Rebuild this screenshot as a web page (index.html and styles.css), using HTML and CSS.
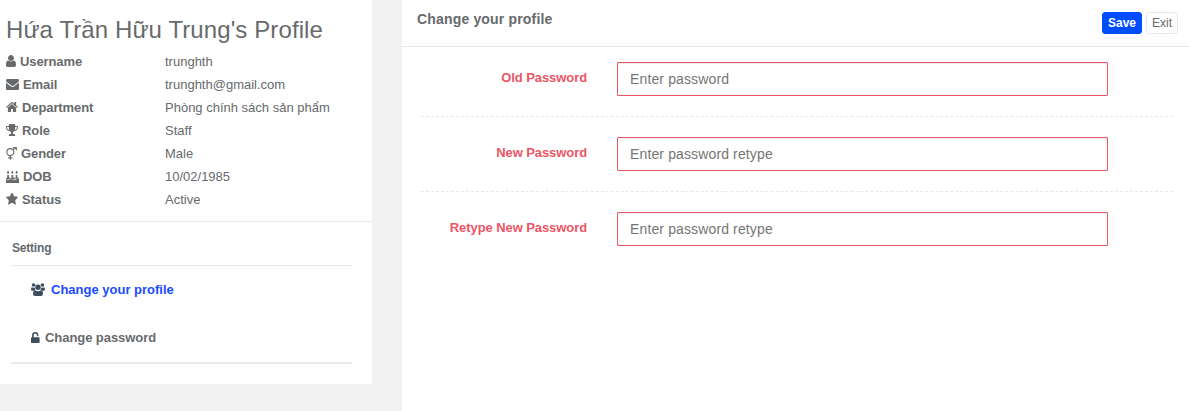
FILE: index.html
```html
<!DOCTYPE html>
<html lang="vi">
<head>
<meta charset="utf-8">
<title>Profile</title>
<link rel="stylesheet" href="styles.css">
</head>
<body>
<div class="page">
  <aside class="sidebar">
    <section class="profile">
      <h2 class="profile-name">Hứa Trần Hữu Trung's Profile</h2>
      <dl class="details">
        <dt><svg class="icon w10" viewBox="256 128 1280 1536" preserveAspectRatio="none"><path d="M1536 1399q0 109-62.5 187t-150.5 78h-854q-88 0-150.5-78t-62.5-187q0-85 8.5-160.5t31.5-152 58.5-131 94-89 134.5-34.5q131 128 313 128t313-128q76 0 134.5 34.5t94 89 58.5 131 31.5 152 8.5 160.5zm-256-887q0 159-112.5 271.5t-271.5 112.5-271.5-112.5-112.5-271.5 112.5-271.5 271.5-112.5 271.5 112.5 112.5 271.5z"/></svg>Username</dt><dd>trunghth</dd>
        <dt><svg class="icon w13" viewBox="0 128 1792 1536" preserveAspectRatio="none"><path d="M1792 710v794q0 66-47 113t-113 47h-1472q-66 0-113-47t-47-113v-794q44 49 101 87 362 246 497 345 57 42 92.5 65.5t94.5 48 110 24.5h2q51 0 110-24.5t94.5-48 92.5-65.5q170-123 498-345 57-39 100-87zm0-294q0 79-49 151t-122 123q-376 261-468 325-10 7-42.5 31t-54 38.5-52 32.5-57.5 27-50 9h-2q-23 0-50-9t-57.5-27-52-32.5-54-38.5-42.5-31q-91-64-262-182.5t-205-142.5q-62-42-117-115.5t-55-136.5q0-78 41.5-130t118.5-52h1472q65 0 112.5 47t47.5 113z"/></svg>Email</dt><dd>trunghth@gmail.com</dd>
        <dt><svg class="icon w12" viewBox="64 128 1664 1536" preserveAspectRatio="none"><path d="M1472 992v480q0 26-19 45t-45 19h-384v-384h-256v384h-384q-26 0-45-19t-19-45v-480q0-1 .5-3t.5-3l575-474 575 474q1 2 1 6zm223-69l-62 74q-8 9-21 11h-3q-13 0-21-7l-692-577-692 577q-12 8-24 7-13-2-21-11l-62-74q-8-10-7-23.5t11-21.5l719-599q32-26 76-26t76 26l244 204v-195q0-14 9-23t23-9h192q14 0 23 9t9 23v408l219 182q10 8 11 21.5t-7 23.5z"/></svg>Department</dt><dd>Phòng chính sách sản phẩm</dd>
        <dt><svg class="icon w12" viewBox="64 128 1664 1536" preserveAspectRatio="none"><path d="M522 883q-74-162-74-371h-256v96q0 78 94.5 162t235.5 113zm1078-275v-96h-256q0 209-74 371 141-29 235.5-113t94.5-162zm128-128v128q0 71-41.5 143t-112 130-173 97.5-215.5 44.5q-42 54-95 95-38 34-52.5 72.5t-14.5 89.5q0 54 30.5 91t97.5 37q75 0 133.5 45.5t58.5 114.5v64q0 14-9 23t-23 9h-832q-14 0-23-9t-9-23v-64q0-69 58.5-114.5t133.5-45.5q67 0 97.5-37t30.5-91q0-51-14.5-89.5t-52.5-72.5q-53-41-95-95-113-5-215.5-44.5t-173-97.5-112-130-41.5-143v-128q0-40 28-68t68-28h288v-96q0-66 47-113t113-47h576q66 0 113 47t47 113v96h288q40 0 68 28t28 68z"/></svg>Role</dt><dd>Staff</dd>
        <dt><svg class="icon tall line w11" viewBox="0 0 11 13"><circle cx="4.3" cy="5.1" r="3.5"/><path d="M6.8 2.6 10 .7M7.2.6h3.1v3M4.3 8.6v4.2M2.2 10.9h4.2"/></svg>Gender</dt><dd>Male</dd>
        <dt><svg class="icon tall w13" viewBox="0 0 13 13"><path d="M0 9.5q.8.8 1.6.8 1 0 1.6-.7.7-.6 1.6-.6t1.6.6q.7.7 1.6.7t1.6-.7q.7-.6 1.500-.6t1.900.5V13H0zM1.200 5h1.800v2.800H5.500V5h1.800v2.800h2.400V5h1.700v2.800q1.600.1 1.600 1.200-.5.3-1 .2-1-.8-2-.8T8.200 9.200t-1.700.1q-1-.9-2-.9t-1.900.9-2 .1L0 9q0-1.100 1.200-1.200zM2.100.5q1 1.400 1 2.200t-1 1.100-1-1.100 1-2.200zM6.400.5q1 1.400 1 2.200t-1 1.100-1-1.100 1-2.200zM10.600.5q1 1.400 1 2.200t-1 1.100-1-1.100 1-2.200z"/></svg>DOB</dt><dd>10/02/1985</dd>
        <dt><svg class="icon w12" viewBox="64 128 1664 1536" preserveAspectRatio="none"><path d="M1728 647q0 22-26 48l-363 354 86 500q1 7 1 20 0 21-10.500 35.500t-30.500 14.500q-19 0-40-12l-449-236-449 236q-22 12-40 12-21 0-31.500-14.500t-10.500-35.500q0-6 2-20l86-500-364-354q-25-27-25-48 0-37 56-46l502-73 225-455q19-41 49-41t49 41l225 455 502 73q56 9 56 46z"/></svg>Status</dt><dd>Active</dd>
      </dl>
    </section>
    <nav class="settings">
      <h5 class="settings-title">Setting</h5>
      <ul class="menu">
        <li><a class="menu-link active"><svg class="icon tall dark w14" viewBox="0 0 14 13"><circle cx="2.600" cy="2" r="1.800"/><circle cx="11.400" cy="2" r="1.800"/><circle cx="7" cy="4.200" r="2.700"/><path d="M1.100 4.200q1.400 1 2.700.4 0 1.400.8 2.200-1 0-1.700.9H1.500Q0 7.700 0 6.500 0 4.300 1.100 4.200zM12.900 4.200q-1.400 1-2.700.4 0 1.400-.8 2.200 1 0 1.700.9h1.400q1.500 0 1.500-1.200 0-2.200-1.100-2.300zM4.200 7.300q2.800 1.800 5.600 0 2.200.1 2.200 3.500Q12 13 10 13H4Q2 13 2 10.800q0-3.400 2.200-3.500z"/></svg>Change your profile</a></li>
        <li><a class="menu-link"><svg class="icon tall dark w9" viewBox="0 0 9 13"><path d="M1.100 6.200V4.200a3.100 3.100 0 0 1 6.200 0v.5q0 .5-.5.5t-.9-.5v-.5a1.600 1.600 0 0 0-3.200 0v2h5q.9 0 .9.900v4.100q0 .9-.9.9H.9q-.9 0-.9-.9V7.100q0-.9 1.100-.9z"/></svg>Change password</a></li>
      </ul>
    </nav>
  </aside>
  <main class="panel">
    <header class="panel-head">
      <h5 class="panel-title">Change your profile</h5>
      <div class="actions"><button class="btn primary">Save</button><button class="btn">Exit</button></div>
    </header>
    <form class="form">
      <div class="field"><label for="old">Old Password</label><input id="old" type="password" placeholder="Enter password"></div>
      <div class="field"><label for="new">New Password</label><input id="new" type="password" placeholder="Enter password retype"></div>
      <div class="field"><label for="retype">Retype New Password</label><input id="retype" type="password" placeholder="Enter password retype"></div>
    </form>
  </main>
</div>
</body>
</html>
```

FILE: styles.css
```css
* { box-sizing: border-box; }
body {
  margin: 0;
  background: #f2f2f2;
  color: #676a6c;
  font: 13px/23px "Liberation Sans", Arial, sans-serif;
  overflow: hidden;
}
h2, h5, dl, dd, ul { margin: 0; padding: 0; }
.page { display: flex; align-items: flex-start; gap: 30px; height: 411px; }
.sidebar { width: 372px; height: 384px; background: #fff; }
.profile { height: 222px; padding: 15px 6px 0; border-bottom: 1px solid #e7eaec; }
.profile-name { font-size: 24px; font-weight: 400; line-height: 30px; margin-bottom: 5px; letter-spacing: .1px; white-space: nowrap; }
.details { display: grid; grid-template-columns: 159px 1fr; grid-auto-rows: 23px; }
dt { font-weight: 700; letter-spacing: -.1px; white-space: nowrap; }
.icon { height: 12px; margin-right: 4px; vertical-align: -1px; fill: currentColor; }
.tall { height: 13px; vertical-align: -2px; }
.line { fill: none; stroke: currentColor; stroke-width: 1.1; }
.dark { color: #3d4d5d; }
.w9 { width: 9px; }
.w10 { width: 10px; }
.w11 { width: 11px; }
.w12 { width: 12px; }
.w13 { width: 13px; }
.w14 { width: 14px; }
.settings { padding: 15px 20px 0 11px; }
.settings-title { height: 29px; padding-left: 1px; font-size: 12px; letter-spacing: -.2px; border-bottom: 1px solid #e7eaec; }
.menu { height: 98px; list-style: none; border-bottom: 2px solid #e7eaec; }
.menu li { height: 48px; padding: 12px 0 0 20px; }
.menu-link { font-weight: 700; letter-spacing: -.06px; }
.menu-link .icon { margin-right: 5px; }
.menu-link.active { color: #1a4bff; letter-spacing: 0; }
.menu-link.active .icon { margin-right: 6px; }
.panel { flex: 1; height: 411px; background: #fff; }
.panel-head { display: flex; justify-content: space-between; height: 47px; padding: 8px 11px 0 15px; border-bottom: 1px solid #e7eaec; }
.panel-title { font-size: 14px; letter-spacing: .17px; }
.actions { display: flex; gap: 4px; padding-top: 4px; }
.btn {
  height: 22px;
  padding: 0 5px;
  border: 1px solid #e7eaec;
  border-radius: 3px;
  background: #fff;
  color: #676a6c;
  font: 12px/18px "Liberation Sans", Arial, sans-serif;
}
.btn.primary { background: #004dff; border-color: #004dff; color: #fff; font-weight: 700; }
.form { padding: 15px 16px 0 19px; }
.field { display: flex; align-items: flex-start; }
.field:not(:last-child) {
  height: 55px;
  margin-bottom: 20px;
  border-bottom: 1px dashed #e7eaec;
}
.field label { width: 166px; margin-right: 30px; padding-top: 4px; text-align: right; font-weight: 700; letter-spacing: -.08px; color: #ed5565; }
.field input {
  width: 491px;
  height: 34px;
  padding: 6px 12px;
  border: 1px solid #ed5565;
  border-radius: 1px;
  background: #fff;
  box-shadow: inset 0 1px 1px rgba(0, 0, 0, .075);
  font: 14px/20px "Liberation Sans", Arial, sans-serif;
  letter-spacing: .13px;
}
.field input::placeholder { color: #757575; }
```
